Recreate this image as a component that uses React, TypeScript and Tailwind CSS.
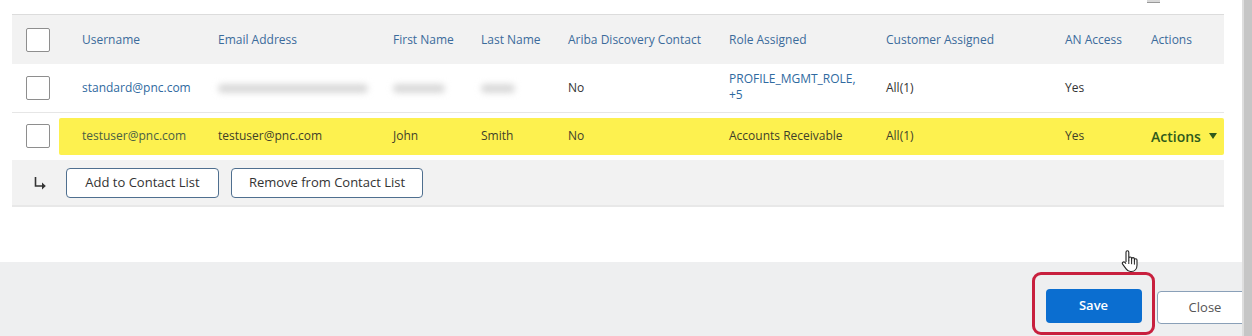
import React from 'react';

const cols = 'grid grid-cols-[70px_136px_175px_88px_87px_161px_157px_179px_86px_73px] items-center';

const Box = () => (
  <div className="w-[24px] h-[24px] border border-[#8e8e8e] rounded-[2px] bg-white" />
);

const Blur = ({ w }: { w: string }) => (
  <div className={`h-[9px] ${w} rounded-full bg-[#d9d9d9] blur-[3px]`} />
);

const headers = ['Username', 'Email Address', 'First Name', 'Last Name', 'Ariba Discovery Contact', 'Role Assigned', 'Customer Assigned', 'AN Access', 'Actions'];

const HandCursor = () => (
  <svg width="20" height="24" viewBox="0 0 20 24" className="absolute left-[1120px] top-[249px]">
    <path
      d="M6 13V3.2a1.4 1.4 0 0 1 2.8 0V11V9.4a1.4 1.4 0 0 1 2.8 0V11.2V10a1.4 1.4 0 0 1 2.8 0V12V11a1.3 1.3 0 0 1 2.6 0v5.2c0 3.6-2.2 6.3-5.8 6.3H10.4c-2 0-3.2-1-4.3-2.6L2.6 15.2a1.5 1.5 0 0 1 2.3-1.9L6 14.6"
      fill="white"
      stroke="#222"
      strokeWidth="1.1"
      strokeLinejoin="round"
    />
    <path d="M8.8 11v4M11.6 11.2v4M14.4 12v3.6" stroke="#222" strokeWidth="1" />
  </svg>
);

export default function App() {
  return (
    <div className="relative w-[1252px] h-[336px] flex bg-white overflow-hidden font-['Open_Sans',_'Noto_Sans',_sans-serif] text-[12px]">
      <div className="w-[1242px] flex flex-col overflow-hidden">
        {/* table area */}
        <div className="h-[262px] bg-white pl-[12px] pr-[18px] pt-[14px]">
          <div className="border-t border-[#dcdcdc]">
            {/* header */}
            <div className={`${cols} h-[49px] bg-[#f2f2f2] text-[#3b6b9b]`}>
              <div className="pl-[14px]"><Box /></div>
              {headers.map((h) => (
                <div key={h} className="whitespace-nowrap">{h}</div>
              ))}
            </div>
            {/* row 1 */}
            <div className={`${cols} h-[49px] border-b border-[#e6e6e6] text-[#333]`}>
              <div className="pl-[14px]"><Box /></div>
              <div className="text-[#2f6aa0]">standard@pnc.com</div>
              <div><Blur w="w-[150px]" /></div>
              <div><Blur w="w-[52px]" /></div>
              <div><Blur w="w-[34px]" /></div>
              <div>No</div>
              <div className="text-[#2f6aa0] leading-[16px] pb-[3px]">PROFILE_MGMT_ROLE,<br />+5</div>
              <div>All(1)</div>
              <div>Yes</div>
              <div />
            </div>
            {/* row 2 - highlighted */}
            <div className="flex items-center h-[46px]">
              <div className="w-[47px] pl-[14px]"><Box /></div>
              <div className="flex-1 h-[37px] bg-[#fdf14f] rounded-[2px] grid grid-cols-[23px_136px_175px_88px_87px_161px_157px_179px_86px_73px] items-center text-[#3f3f2a]">
                <div />
                <div className="text-[#4a5f45]">testuser@pnc.com</div>
                <div>testuser@pnc.com</div>
                <div>John</div>
                <div>Smith</div>
                <div>No</div>
                <div>Accounts Receivable</div>
                <div>All(1)</div>
                <div>Yes</div>
                <div className="flex items-center gap-[8px] text-[14px] font-semibold text-[#2f5a1c] whitespace-nowrap">
                  Actions
                  <svg width="8" height="6" viewBox="0 0 8 6"><path d="M0 0h8L4 6z" fill="#2f5a1c" /></svg>
                </div>
              </div>
            </div>
            {/* action row */}
            <div className="flex items-center h-[47px] bg-[#f2f2f2] border-b-[2px] border-[#e8e8e8] mt-[1px]">
              <div className="w-[54px] flex justify-center pl-[2px]">
                <svg width="14" height="14" viewBox="0 0 14 14">
                  <path d="M2.5 1v9h8" fill="none" stroke="#333" strokeWidth="1.6" />
                  <path d="M9 6.5l3.8 3.5L9 13.5z" fill="#333" />
                </svg>
              </div>
              <div className="flex gap-[12px]">
                <button className="h-[30px] w-[153px] border border-[#4f6f8f] rounded-[4px] bg-white text-[13px] text-[#333]">
                  Add to Contact List
                </button>
                <button className="h-[30px] w-[192px] border border-[#4f6f8f] rounded-[4px] bg-white text-[13px] text-[#333]">
                  Remove from Contact List
                </button>
              </div>
            </div>
          </div>
        </div>
        {/* footer */}
        <div className="flex-1 bg-[#eeeff0] flex items-start justify-end pt-[10px]">
          <div className="w-[123px] h-[63px] border-[3px] border-[#c8203e] rounded-[9px] flex justify-center pt-[14px]">
            <button className="w-[96px] h-[34px] rounded-[4px] bg-[#0b6ed0] text-white text-[13px] font-semibold">
              Save
            </button>
          </div>
          <button className="mt-[19px] ml-[2px] mr-[-11px] w-[96px] h-[33px] rounded-[4px] border border-[#8aa0b8] bg-white text-[13px] text-[#555]">
            Close
          </button>
        </div>
      </div>
      {/* scrollbar */}
      <div className="w-[10px] bg-[#c6c6c6] border-l-[2px] border-[#dedede]" />
      <div className="absolute left-[1147px] top-0 w-[13px] h-[3px] bg-[#d8d8d8] border-b border-[#999]" />
      <HandCursor />
    </div>
  );
}
